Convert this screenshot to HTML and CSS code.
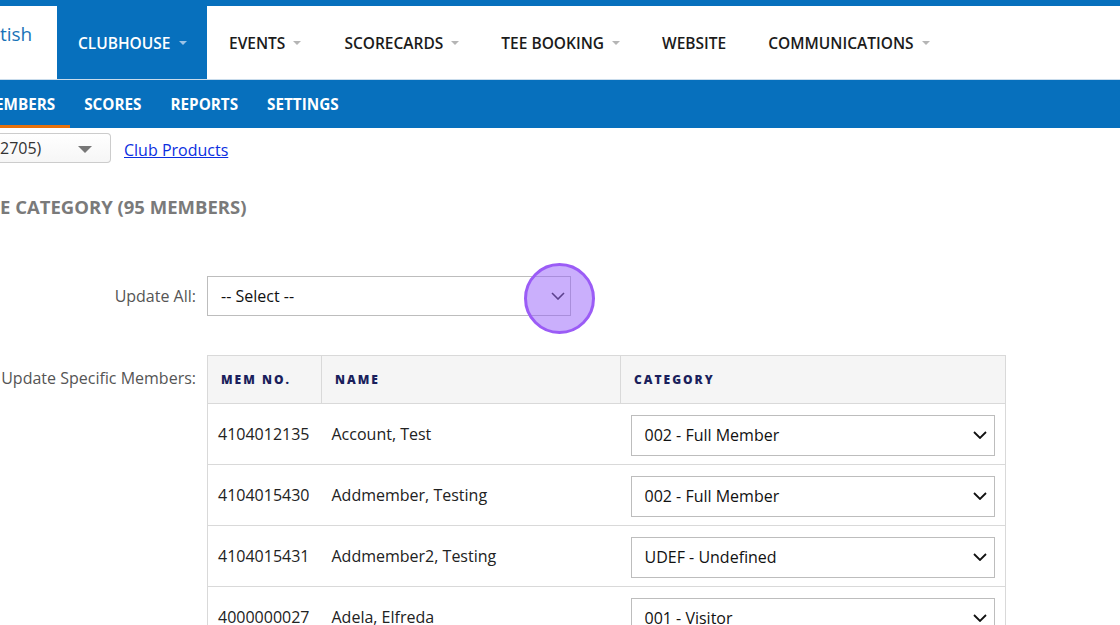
FILE: index.html
```html
<!DOCTYPE html>
<html>
<head>
<meta charset="utf-8">
<link rel="stylesheet" href="styles.css">
</head>
<body>
<header class="header">
  <div class="navrow">
    <div class="logo">tish</div>
    <nav class="mainnav">
      <a class="nav-item active">CLUBHOUSE <span class="caret"></span></a>
      <div class="navlist">
        <a class="nav-item">EVENTS <span class="caret"></span></a>
        <a class="nav-item">SCORECARDS <span class="caret"></span></a>
        <a class="nav-item">TEE BOOKING <span class="caret"></span></a>
        <a class="nav-item">WEBSITE</a>
        <a class="nav-item">COMMUNICATIONS <span class="caret"></span></a>
      </div>
    </nav>
  </div>
  <nav class="subnav">
    <a class="sub-item current">EMBERS</a>
    <a class="sub-item">SCORES</a>
    <a class="sub-item">REPORTS</a>
    <a class="sub-item">SETTINGS</a>
  </nav>
</header>

<main class="main">
  <div class="toolbar">
    <div class="club-select">2705)<span class="club-caret"></span></div>
    <a class="link" href="#">Club Products</a>
  </div>

  <h2 class="heading">E CATEGORY (95 MEMBERS)</h2>

  <div class="form-row update-all">
    <label class="label">Update All:</label>
    <div class="field">
      <div class="select wide">-- Select --
        <svg class="chev" width="14" height="8" viewBox="0 0 14 8"><polyline points="1,1 7,7 13,1" fill="none" stroke="#222" stroke-width="1.6"/></svg>
      </div>
      <div class="highlight"></div>
    </div>
  </div>

  <div class="form-row specific">
    <label class="label label-top">Update Specific Members:</label>
    <table class="members">
      <thead>
        <tr><th class="c-no">MEM NO.</th><th class="c-name">NAME</th><th class="c-cat">CATEGORY</th></tr>
      </thead>
      <tbody>
        <tr><td>4104012135</td><td>Account, Test</td><td><div class="select">002 - Full Member<svg class="chev" width="14" height="8" viewBox="0 0 14 8"><polyline points="1,1 7,7 13,1" fill="none" stroke="#111" stroke-width="1.8"/></svg></div></td></tr>
        <tr><td>4104015430</td><td>Addmember, Testing</td><td><div class="select">002 - Full Member<svg class="chev" width="14" height="8" viewBox="0 0 14 8"><polyline points="1,1 7,7 13,1" fill="none" stroke="#111" stroke-width="1.8"/></svg></div></td></tr>
        <tr><td>4104015431</td><td>Addmember2, Testing</td><td><div class="select">UDEF - Undefined<svg class="chev" width="14" height="8" viewBox="0 0 14 8"><polyline points="1,1 7,7 13,1" fill="none" stroke="#111" stroke-width="1.8"/></svg></div></td></tr>
        <tr><td>4000000027</td><td>Adela, Elfreda</td><td><div class="select">001 - Visitor<svg class="chev" width="14" height="8" viewBox="0 0 14 8"><polyline points="1,1 7,7 13,1" fill="none" stroke="#111" stroke-width="1.8"/></svg></div></td></tr>
      </tbody>
    </table>
  </div>
</main>
</body>
</html>
```

FILE: styles.css
```css
* { box-sizing: border-box; }
html, body { margin: 0; padding: 0; }
body {
  font-family: "Open Sans", "Noto Sans", sans-serif;
  color: #222;
  background: #fff;
  width: 1120px;
  height: 625px;
  overflow: hidden;
}
a { text-decoration: none; color: inherit; }

.header { background: #0770bd; padding-top: 6px; }
.navrow {
  display: flex;
  height: 74px;
  border-bottom: 1px solid #c9dcec;
}
.logo {
  width: 57px;
  background: #fff;
  color: #1a73b8;
  font-size: 19px;
  padding-top: 19px;
  line-height: 18px;
}
.mainnav { display: flex; flex: 1; }
.navlist {
  display: flex;
  flex: 1;
  background: #fff;
  padding-left: 1px;
}
.nav-item {
  display: flex;
  align-items: center;
  padding: 0 21px;
  font-size: 15.5px;
  font-weight: 600;
  color: #1b1b1b;
  white-space: nowrap;
  gap: 8px;
}
.nav-item:nth-child(2) { padding-left: 22px; }
.nav-item.active {
  background: #0770bd;
  color: #fff;
  width: 150px;
}
.caret {
  width: 0; height: 0;
  border-left: 4px solid transparent;
  border-right: 4px solid transparent;
  border-top: 4px solid #b5b5b5;
  margin-top: 1px;
}
.active .caret { border-top-color: #9cc3e6; }

.subnav {
  display: flex;
  height: 48px;
  overflow: hidden;
}
.sub-item {
  display: flex;
  align-items: center;
  padding: 0 14.5px;
  font-size: 15.25px;
  font-weight: 700;
  color: #fff;
  border-bottom: 3px solid transparent;
  padding-top: 3px;
}
.sub-item.current {
  padding-left: 0;
  margin-left: -5px;
  padding-right: 15px;
  border-bottom-color: #e8720c;
}
.sub-item:nth-child(2) { padding-left: 14px; }

.main { padding-top: 5px; position: relative; }
.toolbar { display: flex; align-items: center; gap: 13px; }
.club-select {
  width: 111px;
  height: 30px;
  border: 1px solid #ccc;
  border-left: none;
  border-radius: 0 4px 4px 0;
  background: linear-gradient(#fff, #f6f6f6);
  font-size: 16px;
  line-height: 28px;
  color: #333;
  position: relative;
}
.club-caret {
  position: absolute;
  left: 78px; top: 12px;
  width: 0; height: 0;
  border-left: 7px solid transparent;
  border-right: 7px solid transparent;
  border-top: 7px solid #777;
}
.link { color: #0b2ee0; text-decoration: underline; font-size: 16px; margin-top: 3px; }

.heading {
  margin: 32px 0 0 0;
  font-size: 18.5px;
  line-height: 24px;
  font-weight: 700;
  color: #7a7a7a;
}

.form-row { display: flex; gap: 11px; margin-left: -40px; }
.label {
  width: 236px;
  flex: none;
  text-align: right;
  font-size: 16px;
  color: #555;
}
.update-all { margin-top: 57px; align-items: center; }
.field { position: relative; }
.select {
  display: flex;
  align-items: center;
  justify-content: space-between;
  height: 41px;
  border: 1px solid #bdbdbd;
  background: #fff;
  font-size: 16px;
  color: #111;
  padding: 0 7px 0 13px;
}
.select.wide { width: 364px; height: 40px; padding-right: 5px; }
.chev { flex: none; }
.highlight {
  position: absolute;
  left: 317px; top: -13px;
  width: 71px; height: 71px;
  border-radius: 50%;
  border: 3px solid #9b5cf6;
  background: rgba(150, 96, 250, 0.5);
}

.specific { margin-top: 39px; align-items: flex-start; }
.label-top { padding-top: 12px; }

.members {
  border-collapse: collapse;
  width: 799px;
  border: 1px solid #d9d9d9;
  font-size: 16px;
}
.members th {
  background: #f5f5f5;
  height: 48px;
  text-align: left;
  font-size: 12px;
  font-weight: 800;
  letter-spacing: 2px;
  color: #1a1f5c;
  padding: 0 13px;
  border: 1px solid #d9d9d9;
}
.c-no { width: 114px; }
.c-name { width: 299px; }
.members td {
  height: 61px;
  padding: 0 10px;
  border-top: 1px solid #d9d9d9;
  vertical-align: middle;
  white-space: nowrap;
}
.members td:nth-child(2) { padding-left: 10px; }
.members td .select { margin-top: 2px; }
```
